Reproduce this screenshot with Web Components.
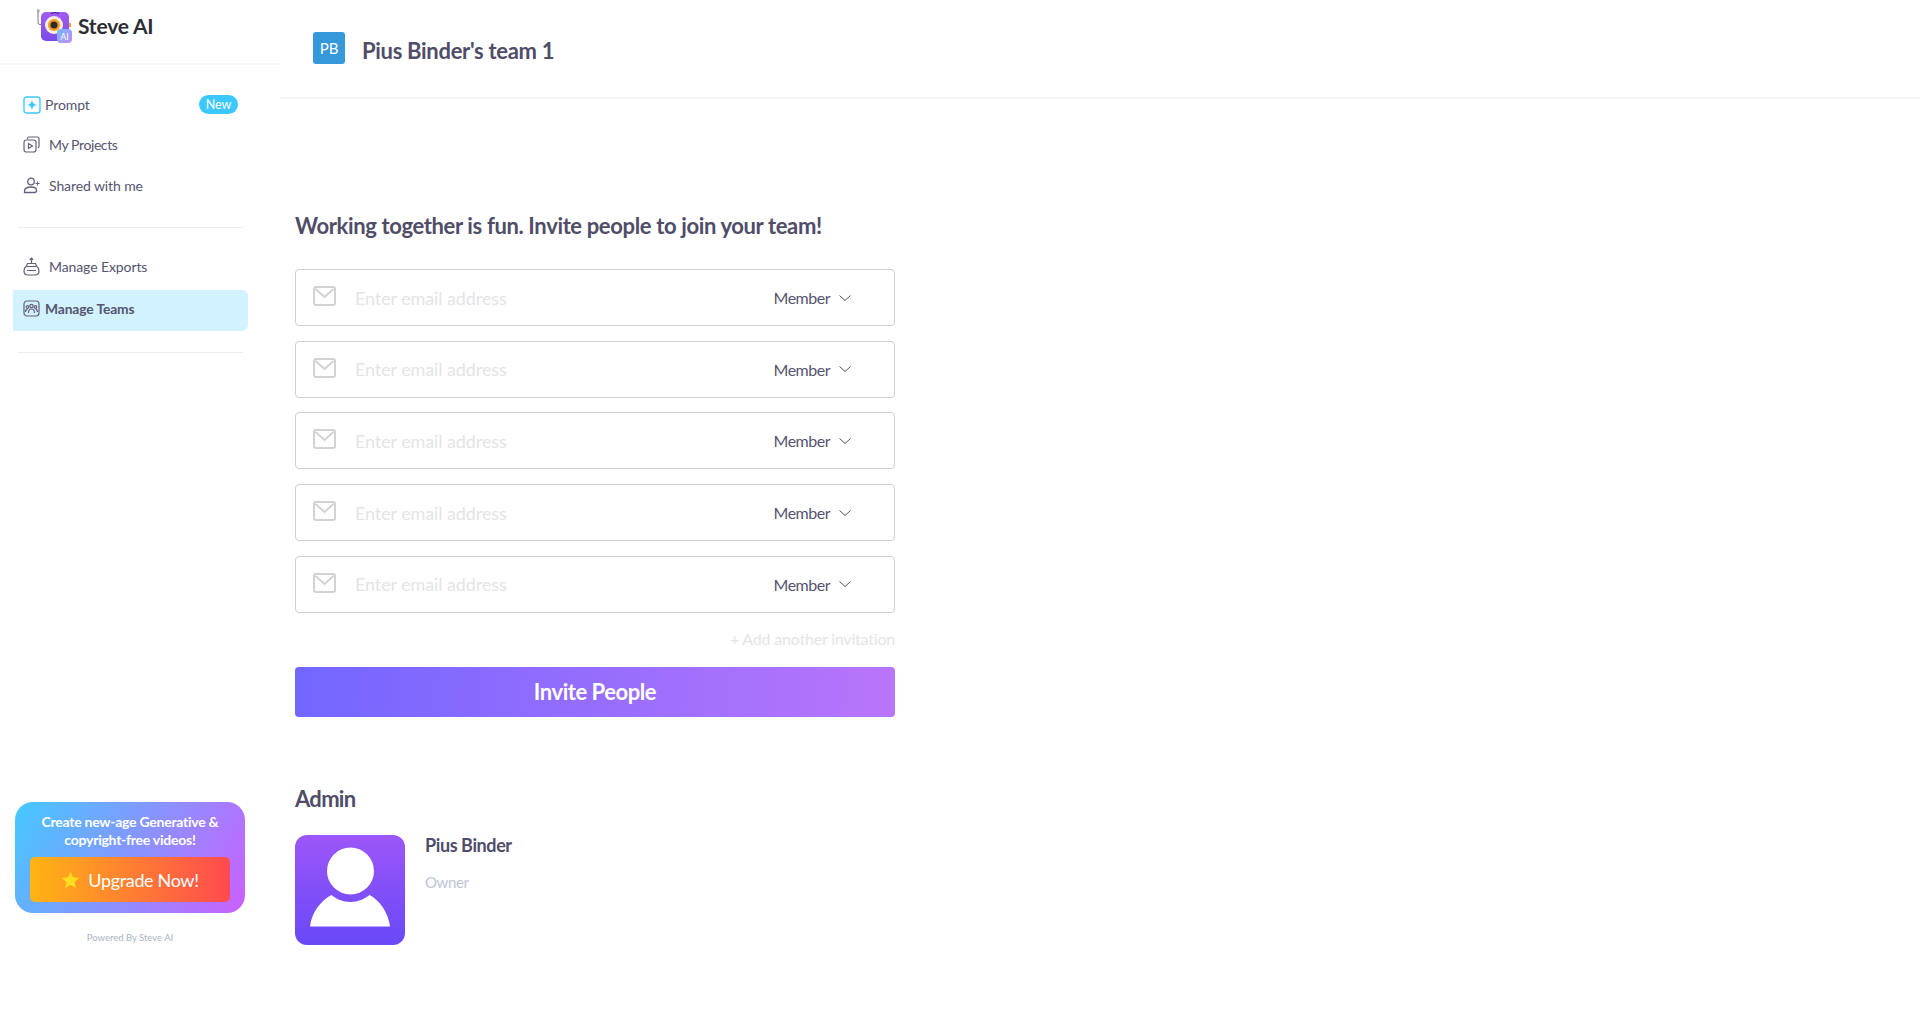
<!DOCTYPE html>
<html>
<head>
<meta charset="utf-8">
<title>Manage Teams</title>
<style>
	html, body { margin: 0; height: 100%; background: #fff; }
	body { font-family: "Lato", "Liberation Sans", sans-serif; color: #4f4d68; }
</style>
</head>
<body>
<app-shell>
	<side-bar slot="side">
		<nav-item text-gap="4" row="39">
			<svg slot="icon" width="18" height="18" viewBox="0 0 18 18"><rect x="1" y="1" width="16" height="16" rx="2.500" fill="#fff" stroke="#3fc8ff" stroke-width="1.400"/><path d="M9 3.800c.5 3.200 1.800 4.700 5.200 5.200-3.400.5-4.700 2-5.200 5.200-.5-3.200-1.800-4.700-5.200-5.200 3.400-.5 4.700-2 5.200-5.200z" fill="#3fc8ff"/></svg>
			Prompt
			<span slot="badge">New</span>
		</nav-item>
		<nav-item row="41" squeeze>
			<svg slot="icon" width="17" height="17" viewBox="0 0 17 17" fill="none" stroke="#62627a" stroke-width="1.200"><path d="M4.500 3.200V2.400A1.400 1.400 0 0 1 5.900 1h8.600A1.500 1.500 0 0 1 16 2.500v7.700a1.500 1.500 0 0 1-1.300 1.500"/><rect x="1" y="4" width="12" height="12" rx="2.500"/><path d="M5.500 7.500v5l4-2.500z"/></svg>
			My Projects
		</nav-item>
		<nav-item row="41">
			<svg slot="icon" width="18" height="17" viewBox="0 0 18 17" fill="none" stroke="#62627a" stroke-width="1.300"><circle cx="8" cy="4.500" r="3.300"/><path d="M1.500 15.500v-1.300c0-2.600 2.200-4.200 6.500-4.200s5.500 1.600 5.500 3.500c0 1.300-.7 2-2 2z"/><path d="M14.500 4.500v4M12.500 6.500h4" stroke-width="1"/></svg>
			Shared with me
		</nav-item>
		<hr-line></hr-line>
		<nav-item row="41" style="margin-bottom: 3px">
			<svg slot="icon" width="17" height="19" viewBox="0 0 17 19" fill="none" stroke="#62627a" stroke-width="1.200"><path d="M8.500 1v5M6.800 2.800 8.500 1l1.700 1.800"/><path d="M4.500 6.500h8l1 2.500c1.700 1.200 2.500 3 2.500 5 0 2.500-1.500 4-4 4H5c-2.500 0-4-1.500-4-4 0-2 .8-3.800 2.500-5z"/><path d="M3.500 9.500h10M4 13.500h9"/></svg>
			Manage Exports
		</nav-item>
		<nav-item active text-gap="4" row="41">
			<svg slot="icon" width="17" height="17" viewBox="0 0 17 17" fill="none" stroke="#62627a" stroke-width="1.200"><rect x="1" y="1" width="15" height="15" rx="3"/><circle cx="8.500" cy="6" r="1.700"/><circle cx="4.500" cy="7" r="1.300"/><circle cx="12.500" cy="7" r="1.300"/><path d="M5.500 13c0-2.500 1.200-4 3-4s3 1.500 3 4M2.500 12c0-1.500.8-2.700 2-2.700M14.500 12c0-1.500-.8-2.700-2-2.700"/></svg>
			Manage Teams
		</nav-item>
		<hr-line></hr-line>
		<upgrade-card slot="promo"></upgrade-card>
	</side-bar>
	<team-header></team-header>
	<invite-form></invite-form>
	<admin-list></admin-list>
</app-shell>

<script>
// page frame: sidebar on the left, everything else on the right
class AppShell extends HTMLElement {
	constructor() {
		super();
		const shadow = this.attachShadow({mode: 'open'});
		shadow.innerHTML = `
			<style>
				:host { display: grid; grid-template-columns: 280px 1fr; height: 100vh; overflow: hidden; }
				main { min-width: 0; }
			</style>
			<slot name="side"></slot>
			<main><slot></slot></main>
		`;
	}
}
customElements.define('app-shell', AppShell);

class SideBar extends HTMLElement {
	constructor() {
		super();
		const shadow = this.attachShadow({mode: 'open'});
		shadow.innerHTML = `
			<style>
				:host { display: flex; flex-direction: column; height: 100vh; box-sizing: border-box; }
				.brand { border-bottom: 2px solid #f6f6f6; display: flex; gap: 5px; padding-left: 37px; box-sizing: border-box; height: 65px; padding-top: 9px; }
				.brand span { font: 700 21px/34px "Lato", sans-serif; color: #2d2d33; letter-spacing: -.2px; }
				nav { display: flex; flex-direction: column; padding: 20px 0 0 13px; width: 235px; }
				.promo { margin-top: auto; }
			</style>
			<div class="brand">
				<svg width="36" height="36" viewBox="0 0 36 36">
					<defs>
						<linearGradient id="lg" x1="0" y1="0" x2="0" y2="1"><stop offset="0" stop-color="#a45bf5"/><stop offset="1" stop-color="#7a4be8"/></linearGradient>
						<linearGradient id="ai" x1="0" y1="0" x2="1" y2="1"><stop offset="0" stop-color="#6fb8ff"/><stop offset="1" stop-color="#c38cf7"/></linearGradient>
					</defs>
					<path d="M1 3.500v10q0 2 2 2h2" fill="none" stroke="#55545f" stroke-width=".8"/>
					<circle cx="1" cy="2" r="1.200" fill="none" stroke="#55545f" stroke-width=".7"/>
					<rect x="4" y="3" width="28" height="29" rx="5" fill="url(#lg)"/>
					<rect x="32" y="14" width="2" height="4" fill="#f5a623"/>
					<path d="M14 4.500q4-2 8 0" fill="none" stroke="#3d2b72" stroke-width="1"/>
					<circle cx="17" cy="16" r="9" fill="#fdeee0"/>
					<circle cx="17" cy="16" r="6" fill="#f59b1d"/>
					<circle cx="17" cy="16" r="3.500" fill="#2c2a30"/>
					<rect x="20" y="20" width="15" height="14" rx="4" fill="url(#ai)"/>
					<text x="27.500" y="30.500" text-anchor="middle" font-family="Lato, sans-serif" font-size="8.500" fill="#fff">AI</text>
				</svg>
				<span>Steve AI</span>
			</div>
			<nav><slot></slot></nav>
			<div class="promo"><slot name="promo"></slot></div>
		`;
	}
}
customElements.define('side-bar', SideBar);

class NavItem extends HTMLElement {
	static get observedAttributes() { return ['text-gap', 'row']; }
	constructor() {
		super();
		const shadow = this.attachShadow({mode: 'open'});
		shadow.innerHTML = `
			<style>
				:host { display: flex; align-items: center; height: 41px; padding: 0 10px 0 10px; box-sizing: border-box; width: 235px;
					font: 400 14px "Lato", sans-serif; color: #55556f; letter-spacing: -.1px; flex: none; }
				:host([squeeze]) { letter-spacing: -.4px; }
				:host([active]) { background: #d2f2ff; border-radius: 0 6px 6px 0; font-weight: 700; font-size: 13.800px; padding-bottom: 4px; }
				.icon { display: flex; width: 18px; flex: none; }
				.label { flex: 1; margin-left: var(--text-gap, 8px); }
				::slotted([slot=badge]) { background: #3cc8ff; color: #fff; border-radius: 10px; font-size: 12.500px; line-height: 19px; width: 39px; text-align: center; display: block; }
			</style>
			<span class="icon"><slot name="icon"></slot></span>
			<span class="label"><slot></slot></span>
			<slot name="badge"></slot>
		`;
	}
	attributeChangedCallback(name, old, value) {
		if (name == 'text-gap') this.style.setProperty('--text-gap', value + 'px');
		if (name == 'row') this.style.height = value + 'px';
	}
}
customElements.define('nav-item', NavItem);

class HrLine extends HTMLElement {
	constructor() {
		super();
		const shadow = this.attachShadow({mode: 'open'});
		shadow.innerHTML = `
			<style>
				:host { display: block; height: 1px; background: #ededf0; margin: 21px 0 18px 5px; width: 225px; flex: none; }
			</style>
		`;
	}
}
customElements.define('hr-line', HrLine);

class UpgradeCard extends HTMLElement {
	constructor() {
		super();
		const shadow = this.attachShadow({mode: 'open'});
		shadow.innerHTML = `
			<style>
				:host { display: block; padding: 0 35px 77px 15px; }
				.card { background: linear-gradient(120deg, #44c9ff 0%, #cb5fff 100%); border-radius: 18px; height: 111px; box-sizing: border-box; padding: 11px 15px 0; text-align: center; color: #fff; }
				p { margin: 0; font: 700 14px/18px "Lato", sans-serif; letter-spacing: -.25px; }
				.btn { margin-top: 8px; height: 45px; border-radius: 5px; background: linear-gradient(90deg, #ffb414 0%, #ff4a4f 100%); display: flex; align-items: center; justify-content: center; gap: 8px; font: 400 18px "Lato", sans-serif; letter-spacing: -.35px; }
				.powered { font: 400 9.500px "Lato", sans-serif; color: #a9b3c2; text-align: center; margin-top: 19px; }
			</style>
			<div class="card">
				<p>Create new-age Generative &amp;<br>copyright-free videos!</p>
				<div class="btn">
					<svg width="19" height="18" viewBox="0 0 24 24"><path d="M12 1l3.400 7.400 8.100.9-6 5.500 1.700 8L12 18.700 4.800 22.800l1.700-8-6-5.500 8.100-.9z" fill="#ffdc1e"/></svg>
					<span>Upgrade Now!</span>
				</div>
			</div>
			<div class="powered">Powered By Steve AI</div>
		`;
	}
}
customElements.define('upgrade-card', UpgradeCard);

class TeamHeader extends HTMLElement {
	constructor() {
		super();
		const shadow = this.attachShadow({mode: 'open'});
		shadow.innerHTML = `
			<style>
				:host { display: flex; align-items: center; height: 99px; box-sizing: border-box; border-bottom: 2px solid #f6f6f6; padding: 0 0 0 33px; gap: 17px; }
				.pb { width: 32px; height: 32px; margin-top: -2px; border-radius: 3px; background: #3498db; color: #fff; font: 400 15px/32px "Lato", sans-serif; text-align: center; }
				h1 { margin: 3px 0 0; font: 700 22px "Lato", sans-serif; color: #4f4d68; letter-spacing: -.3px; }
			</style>
			<div class="pb">PB</div>
			<h1>Pius Binder's team 1</h1>
		`;
	}
}
customElements.define('team-header', TeamHeader);

class InviteRow extends HTMLElement {
	constructor() {
		super();
		const shadow = this.attachShadow({mode: 'open'});
		shadow.innerHTML = `
			<style>
				:host { display: flex; align-items: center; height: 57px; box-sizing: border-box; border: 1px solid #cfcfd2; border-radius: 4px; padding-left: 17px; font-family: "Lato", sans-serif; }
				svg.mail { flex: none; margin-top: -3px; }
				.ph { flex: 1; margin-left: 19px; font-size: 18px; color: #e4e4e7; letter-spacing: -.1px; }
				.role { font-size: 16px; letter-spacing: -.5px; color: #55556f; margin-right: 9px; }
				svg.chev { margin-right: 43px; }
			</style>
			<svg class="mail" width="23" height="20" viewBox="0 0 23 20" fill="none" stroke="#d2d2d2" stroke-width="2"><rect x="1" y="1" width="21" height="18" rx="2"/><path d="M2.500 3l9 8 9-8"/></svg>
			<span class="ph">Enter email address</span>
			<span class="role">Member</span>
			<svg class="chev" width="12" height="8" viewBox="0 0 12 8" fill="none" stroke="#55556f" stroke-width="1"><path d="M.5 1.500l5.500 5 5.500-5"/></svg>
		`;
	}
}
customElements.define('invite-row', InviteRow);

class InviteForm extends HTMLElement {
	constructor() {
		super();
		const shadow = this.attachShadow({mode: 'open'});
		shadow.innerHTML = `
			<style>
				:host { display: block; width: 600px; margin: 114px 0 0 15px; }
				h2 { margin: 0 0 30px; font: 700 22px/26px "Lato", sans-serif; color: #4f4d68; letter-spacing: -.36px; }
				.rows { display: flex; flex-direction: column; gap: 14.700px; }
				.add { margin-top: 16px; text-align: right; font: 400 16px/20px "Lato", sans-serif; color: #e4e4e7; letter-spacing: -.2px; }
				.go { margin-top: 18px; height: 50px; border-radius: 4px; background: linear-gradient(95deg, #7266ff 0%, #b975fa 100%); color: #fff; font: 700 22px/50px "Lato", sans-serif; letter-spacing: -.45px; text-align: center; }
			</style>
			<h2>Working together is fun. Invite people to join your team!</h2>
			<div class="rows">
				<invite-row></invite-row>
				<invite-row></invite-row>
				<invite-row></invite-row>
				<invite-row></invite-row>
				<invite-row></invite-row>
			</div>
			<div class="add">+ Add another invitation</div>
			<div class="go">Invite People</div>
		`;
	}
}
customElements.define('invite-form', InviteForm);

class AdminList extends HTMLElement {
	constructor() {
		super();
		const shadow = this.attachShadow({mode: 'open'});
		shadow.innerHTML = `
			<style>
				:host { display: block; margin: 68px 0 0 15px; }
				h3 { margin: 0 0 22px; font: 700 22px/28px "Lato", sans-serif; color: #4f4d68; letter-spacing: -.7px; }
				.row { display: flex; gap: 20px; }
				.pic { width: 110px; height: 110px; border-radius: 12px; background: linear-gradient(180deg, #9c56f8, #6849f8); display: block; }
				b { display: block; font: 700 18px/22px "Lato", sans-serif; color: #4f4d68; margin-top: -1px; letter-spacing: -.4px; }
				span { display: block; font: 400 15px/20px "Lato", sans-serif; color: #bcc6d6; margin-top: 16px; letter-spacing: -.4px; }
			</style>
			<h3>Admin</h3>
			<div class="row">
				<svg class="pic" viewBox="0 0 110 110"><circle cx="55.500" cy="36" r="23.500" fill="#fff"/><path d="M36.500 60c5 4 11 7 19 7s13.500-3 19-7c10 5 19 18 20.500 31.500H15c1.500-14 11-26 21.500-31.500z" fill="#fff"/></svg>
				<div>
					<b>Pius Binder</b>
					<span>Owner</span>
				</div>
			</div>
		`;
	}
}
customElements.define('admin-list', AdminList);
</script>
</body>
</html>
